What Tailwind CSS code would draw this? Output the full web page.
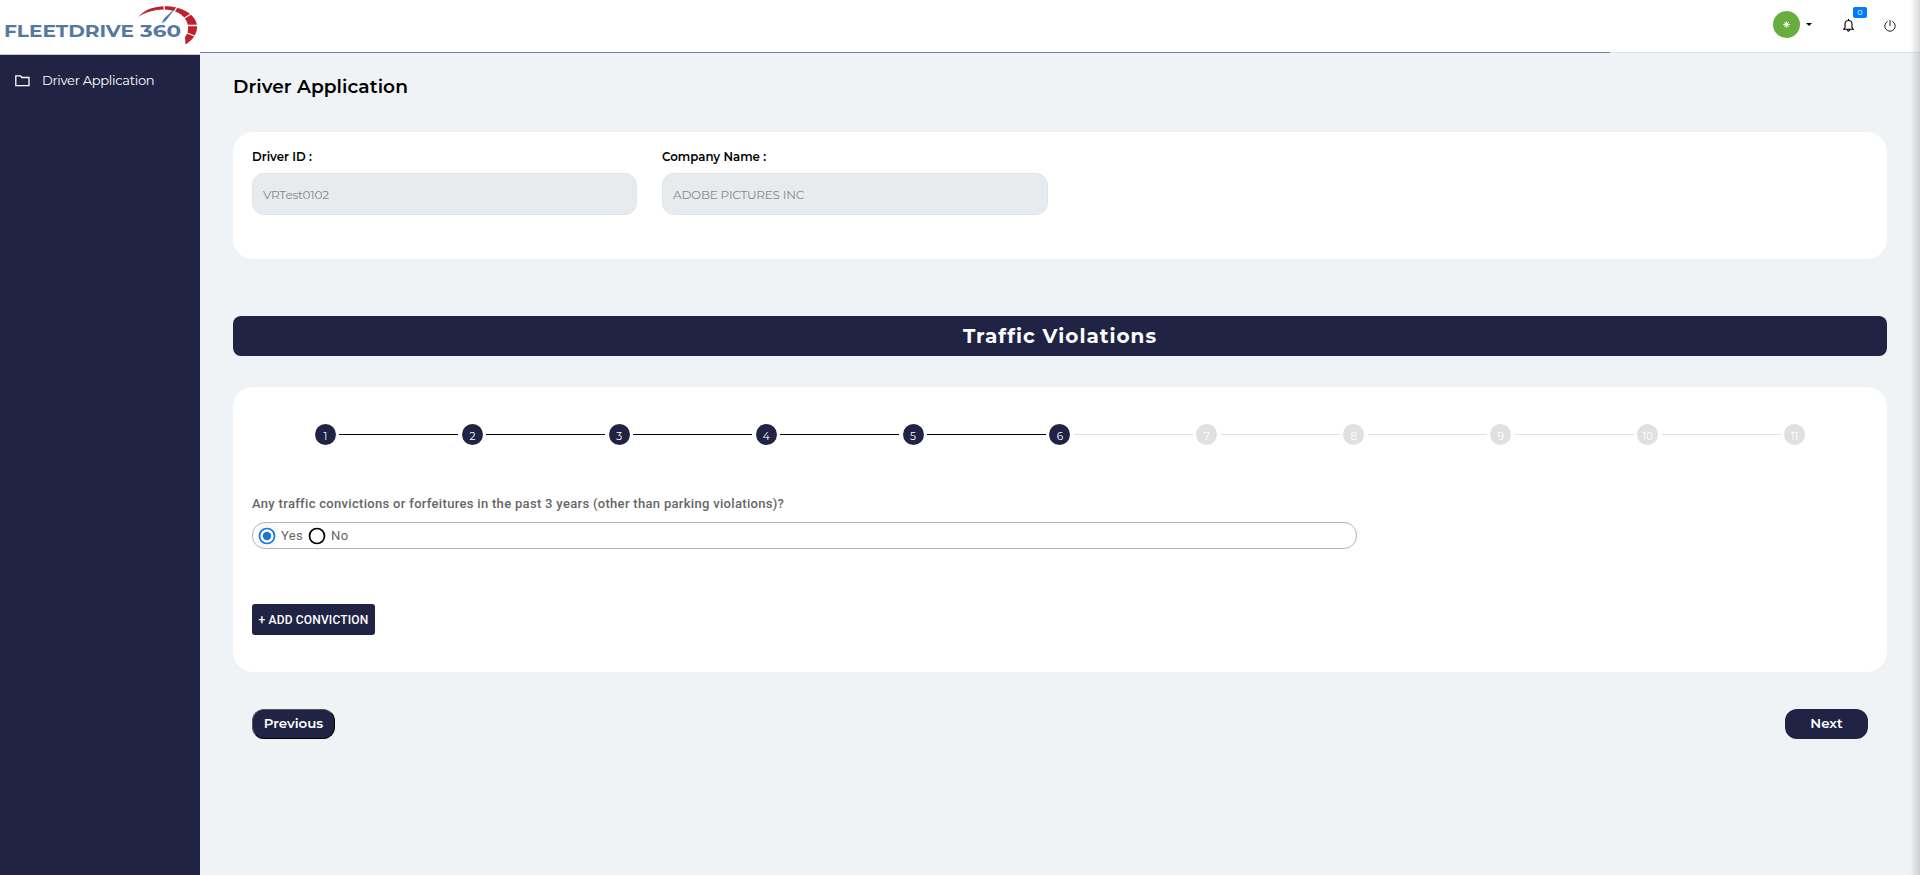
<!DOCTYPE html>
<html lang="en">
<head>
<meta charset="utf-8">
<title>Driver Application</title>
<script src="https://cdn.jsdelivr.net/npm/@tailwindcss/browser@4"></script>
</head>
<body class="relative flex h-screen overflow-hidden bg-[#eff3f6] font-[Montserrat,Inter,sans-serif] text-black">
<aside class="flex w-[200px] shrink-0 flex-col bg-[#212344]">
  <div class="h-[55px] border-b border-[#c8c8c8] bg-white">
    <svg class="block" width="200" height="54" viewBox="0 0 200 54" font-family="Montserrat, Inter, sans-serif" font-weight="700" fill="#54789f">
      <text x="4" y="36.700" font-size="16" textLength="130" lengthAdjust="spacingAndGlyphs">FLEETDRIVE</text>
      <text x="140" y="36.700" font-size="16" textLength="41" lengthAdjust="spacingAndGlyphs">360</text>
      <path fill="#c01f2e" d="M138 17C146 8 158 5 171 6.500C186 8.500 196 16 197.200 26C197 34 193 40 185.500 44.500L185 37C187.500 34 188.500 30 188 26C187 18.500 181 12.500 172 10.500C160 8 148 11 138 17Z"/>
      <path stroke="#fff" stroke-width="1.300" fill="none" d="M164 5l.5 6M177 7l-3.500 6M191 14l-6.500 4M198 25.500h-11M196 36.500l-9-3.500"/>
      <path d="M176 7.500L166 20.500L161.500 23.500L164 18.500Z"/>
    </svg>
  </div>
  <nav class="flex h-[52px] items-center pl-[15px] text-white">
    <svg width="15" height="12" viewBox="0 0 15 12" fill="none" stroke="#fff" stroke-width="1.300"><path d="M.8 10.700V.800H5.500L6.800 2.500H14V10.700Z"/></svg>
    <span class="ml-3 text-[13px] tracking-[-0.28px]">Driver Application</span>
  </nav>
</aside>
<div class="flex grow flex-col">
  <header class="flex h-[53px] shrink-0 flex-col bg-white">
    <div class="flex grow justify-end pr-6">
      <div class="mt-[11px] flex size-[27px] items-center justify-center rounded-full bg-[#67ae3e]">
        <svg width="7" height="7" viewBox="0 0 7 7" stroke="#fff" stroke-opacity=".8" stroke-width=".9"><circle cx="3.500" cy="3.500" r="1.700" fill="#fff"/><path d="M3.500 0v7M0 3.500h7M1 1l5 5M6 1l-5 5"/></svg>
      </div>
      <svg class="mt-[23px] ml-[6px]" width="6" height="3"><path d="M0 0H6L3 3Z"/></svg>
      <div class="relative mt-[19px] ml-[31px] w-[11px]">
        <svg width="11" height="13" viewBox="0 0 11 13" fill="none" stroke="#000" stroke-width="1.100"><path d="M5.500 0V1.500M.6 10.300H10.400L9 8.500V5C9 3 7.500 1.500 5.500 1.500S2 3 2 5V8.500ZM4.300 10.800C4.500 12.500 6.500 12.500 6.700 10.800"/></svg>
        <span class="absolute -top-3 left-[10px] flex h-[11px] w-[14px] items-center justify-center rounded-[2px] bg-[#007bff] pb-px text-[8px] leading-none text-white">0</span>
      </div>
      <svg class="mt-5 ml-[30px]" width="12" height="12" viewBox="0 0 12 12" fill="none" stroke="#222236" stroke-width="1"><path d="M6 0V6M3.600 1.400A5.200 5.200 0 1 0 8.400 1.400"/></svg>
    </div>
    <div class="h-px bg-[#dce4ec]"><div class="h-px w-[1410px] bg-[#7b7bab]"></div></div>
  </header>
  <main class="flex flex-col pr-[33px] pl-[33px]">
    <h1 class="mt-5 h-7 text-[18.6px] leading-7 font-semibold tracking-[0.07px]">Driver Application</h1>
    <section class="mt-[31px] flex h-[127px] gap-[25px] rounded-[20px] bg-white px-[19px] pt-[17px]">
      <div class="w-[385px]">
        <div class="h-6 text-[11.8px] leading-4 font-semibold">Driver ID :</div>
        <div class="flex h-[42px] items-center rounded-xl border border-[#dfe6ea] bg-[#e7ebee] px-[10px] pt-px text-[12px] tracking-[-0.2px] text-[#85888c]">VRTest0102</div>
      </div>
      <div class="w-[386px]">
        <div class="h-6 text-[11.8px] leading-4 font-semibold">Company Name :</div>
        <div class="flex h-[42px] items-center rounded-xl border border-[#dfe6ea] bg-[#e7ebee] px-[10px] pt-px text-[12px] tracking-[-0.2px] text-[#85888c]">ADOBE PICTURES INC</div>
      </div>
    </section>
    <h2 class="mt-[57px] flex h-10 items-center justify-center rounded-lg bg-[#212344] text-[20px] font-bold tracking-[1px] text-white">Traffic Violations</h2>
    <section class="mt-[31px] h-[285px] rounded-[20px] bg-white px-[19px] pt-[37px]">
      <ol id="steps" class="flex h-[21px]"></ol>
      <p class="mt-[50px] h-[18px] font-[Roboto,sans-serif] text-[13px] leading-[18px] font-medium tracking-[0.31px] text-[#666]">Any traffic convictions or forfeitures in the past 3 years (other than parking violations)?</p>
      <div class="mt-[9px] flex h-[27px] w-[1105px] items-center rounded-[13px] border border-[#b5b5b5] font-[Roboto,sans-serif] text-[13px] tracking-[0.4px] text-[#666]">
        <span class="ml-[5px] flex h-[25px] w-[19px] shrink-0 items-center bg-[#1976d2]/4"><svg width="18" height="18"><circle cx="9" cy="9" r="7.500" fill="#fff" stroke="#1976d2" stroke-width="1.700"/><circle cx="9" cy="9" r="4.200" fill="#1976d2"/></svg></span>
        <span class="ml-1 w-[25px] pt-px">Yes</span>
        <svg class="ml-[2px]" width="18" height="18"><circle cx="9" cy="9" r="7.500" fill="#fff" stroke="#000" stroke-width="1.700"/></svg>
        <span class="ml-[5px] pt-px">No</span>
      </div>
      <button class="mt-[55px] flex h-[31px] w-[123px] items-center justify-center rounded-[3px] bg-[#212344] font-[Roboto,sans-serif] text-[12px] font-medium tracking-[0.17px] whitespace-nowrap text-white">+ ADD CONVICTION</button>
    </section>
    <div class="mt-[37px] flex justify-between px-[19px] text-[13.4px] font-semibold text-white">
      <button class="h-[30px] w-[83px] rounded-xl border border-t-[#55555c] border-r-black border-b-black border-l-[#55555c] bg-[#212344] pb-px">Previous</button>
      <button class="h-[30px] w-[83px] rounded-xl bg-[#212344] pb-px">Next</button>
    </div>
  </main>
</div>
<div class="absolute inset-y-0 right-0 w-[10px] bg-linear-to-r from-transparent to-black/15"></div>
<script>
const steps = document.getElementById('steps');
for (let i = 1; i <= 11; i++) {
  const done = i <= 6;
  const li = document.createElement('li');
  li.className = 'flex flex-1 items-center';
  const line = on => '<span class="h-px flex-1 ' + (on ? 'bg-black' : 'bg-[#e0e0e0]') + '"></span>';
  const gap = '<span class="h-px flex-1"></span>';
  li.innerHTML = (i > 1 ? line(done) : gap) +
    '<span class="mx-[3.5px] flex size-[21px] items-center justify-center rounded-full pt-[5px] text-[10.5px] leading-none ' +
    (done ? 'bg-[#212344] text-white' : 'bg-[#e0e0e0] text-white') + '">' + i + '</span>' +
    (i < 11 ? line(i < 6) : gap);
  steps.append(li);
}
</script>
</body>
</html>
